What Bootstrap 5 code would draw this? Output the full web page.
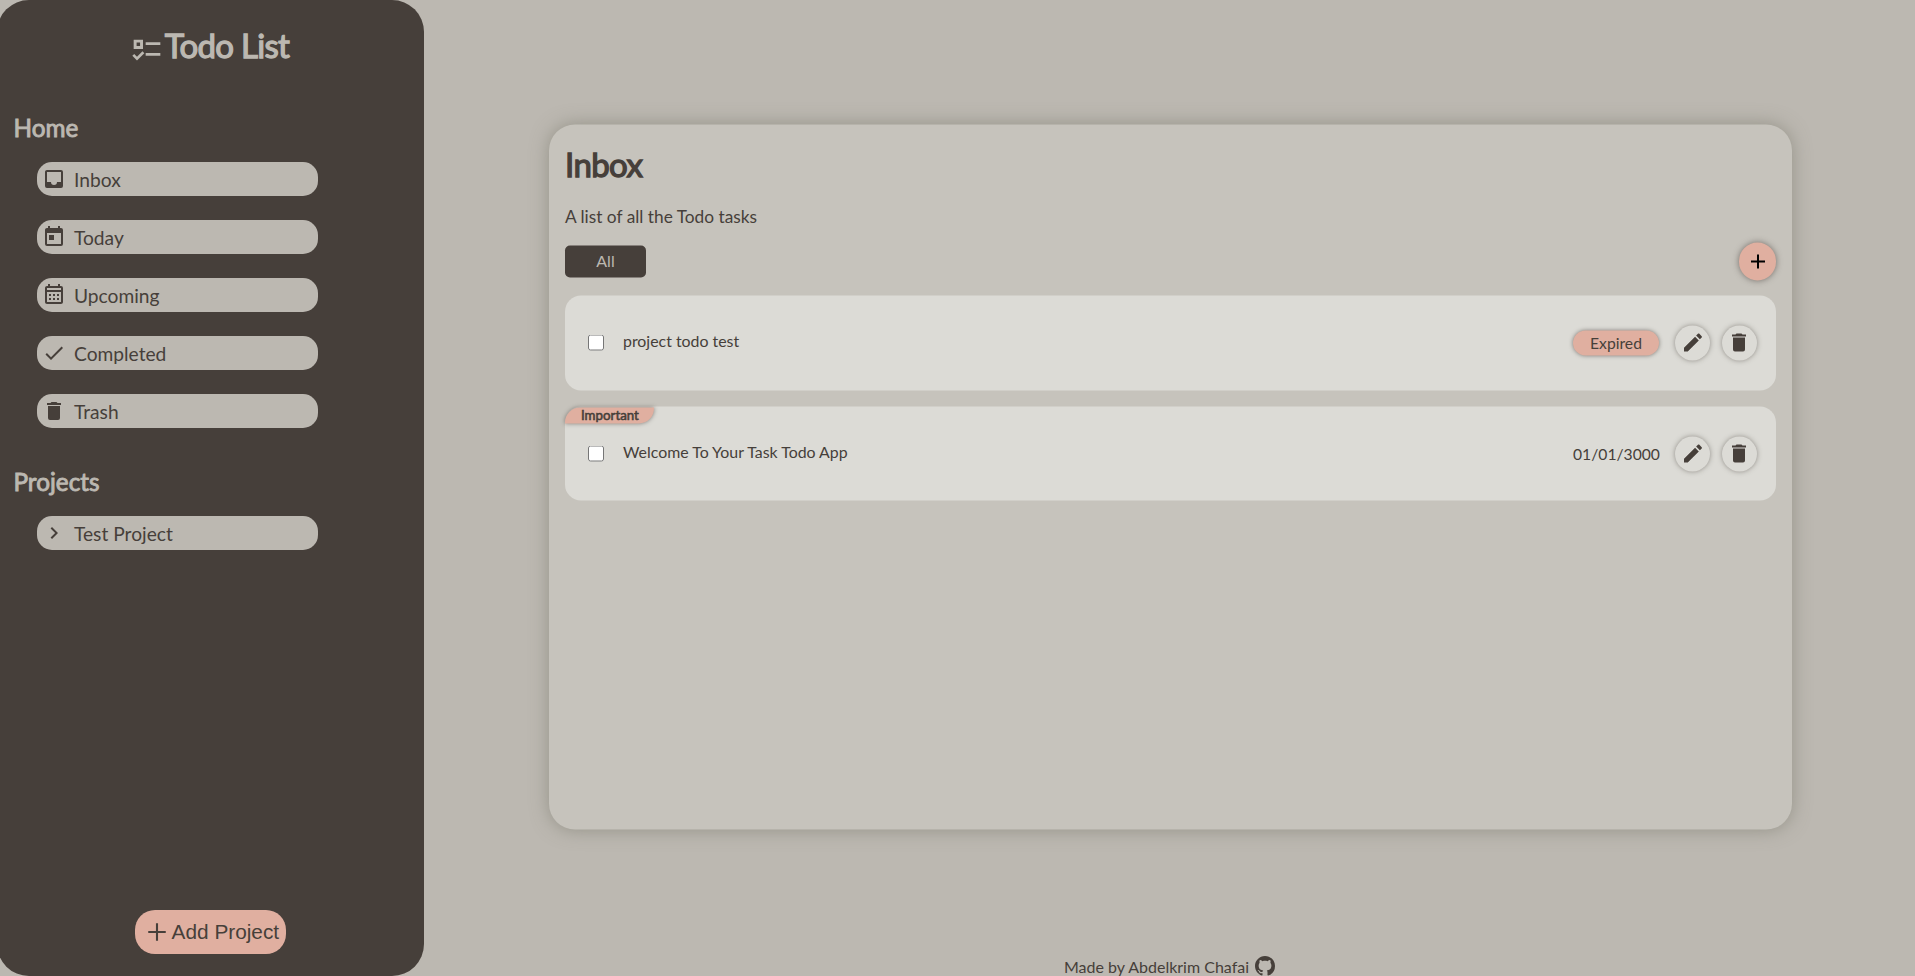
<!DOCTYPE html>
<html lang="en">
<head>
<meta charset="utf-8">
<meta name="viewport" content="width=device-width, initial-scale=1">
<title>Todo List</title>
<link rel="stylesheet" href="https://cdn.jsdelivr.net/npm/bootstrap@5.3.0/dist/css/bootstrap.min.css">
<style>
  :root { --ink:#463f3a; --sand:#bcb8b1; --rose:#e0afa0; --panel:#c6c3bc; --tile:#dcdbd6; }
  html, body { height:100%; }
  body { background:var(--sand); color:var(--ink); font-family:Lato, "Liberation Sans", sans-serif; line-height:normal; overflow:hidden; }
  svg { fill:currentColor; display:block; flex:none; }
  .sidebar { width:427px; height:976px; margin-left:-3px; background:var(--ink); color:var(--sand); border-radius:32px; }
  .brand { padding:25px 1px 0 0; gap:2px; height:92px; }
  .brand h1 { font-size:33px; font-weight:400; -webkit-text-stroke:1.3px currentColor; letter-spacing:-.7px; line-height:40px; }
  .brand svg { margin-top:8px; }
  .side-head { font-size:24.3px; font-weight:400; -webkit-text-stroke:.9px currentColor; line-height:29px; margin:0 0 0 16.5px; }
  .side-list { margin:20px 0 0 40px; width:281px; gap:24px; }
  .side-link { height:34px; border-radius:15px; background:var(--sand); color:var(--ink); font-size:19.2px; padding:0 0 0 5px; gap:8px; }
  .side-link svg { margin-bottom:1px; }
  .home-head { margin-top:21px; }
  .projects-head { margin-top:39px; }
  .add-project { width:151px; height:44px; margin:auto auto 22px 138px; border:0; border-radius:20px; background:var(--rose); color:var(--ink); font:20.8px "Liberation Sans", Arial, sans-serif; padding:0 0 0 8px; gap:.6px; white-space:nowrap; }
  .stage { padding-top:124px; }
  .panel { width:1243px; height:705px; margin-left:125px; padding:0 16px; border-radius:26px; background:var(--panel); box-shadow:0 0 18px rgba(110,110,95,.5); transform:translateY(.5px); }
  .panel h2 { font-size:33px; font-weight:400; -webkit-text-stroke:1.3px currentColor; letter-spacing:-.6px; line-height:40px; margin:19px 0 0; }
  .lede { font-size:17.3px; line-height:22px; margin:22px 0 0; }
  .tools { height:38px; margin-top:15px; }
  .tab-all { width:81px; height:32px; border:0; border-radius:5px; background:var(--ink); color:var(--sand); font-size:16px; line-height:28px; padding:0 0 2px; }
  .add-task { width:37.5px; height:37.5px; border:0; background:var(--rose); color:#000; box-shadow:0 0 6px rgba(70,63,58,.65); }
  .add-task svg { margin-left:1px; }
  .tile { height:95px; border-radius:16px; background:var(--tile); padding:0 19px 0 23px; margin-top:15px; font-size:15.9px; }
  .tile + .tile { height:94px; margin-top:16px; }
  .tile input { width:16px; height:16px; margin:0 0 1px; }
  .tile .task-name { margin-left:19px; padding-bottom:6px; }
  .flag { left:0; top:1px; width:89px; height:16px; border-radius:15px 0 15px 0; background:var(--rose); box-shadow:0 0 4px rgba(70,63,58,.6); font-size:13.3px; font-weight:400; -webkit-text-stroke:.55px currentColor; line-height:14px; padding-left:16px; }
  .due { width:86px; margin-right:1px; font-size:15.7px; white-space:nowrap; }
  .pill { height:25px; line-height:24px; border-radius:13px; background:var(--rose); box-shadow:0 0 4px rgba(70,63,58,.65); }
  .round { width:35px; height:35px; border:0; padding:0; background:var(--tile); color:var(--ink); box-shadow:0 0 5px rgba(70,63,58,.5); }
  .round svg { margin-bottom:1px; }
  .round-first { margin-left:15px; }
  .round-last { margin-left:12px; }
  .round-last svg { margin-left:-1px; }
  .credit { margin-top:123px; font-size:16px; gap:6px; line-height:30px; }
  .credit svg { margin-top:4px; }
</style>
</head>
<body>
<svg class="d-none" xmlns="http://www.w3.org/2000/svg">
  <symbol id="i-bin" viewBox="0 0 24 24"><path d="M19,4H15.5L14.5,3H9.5L8.5,4H5V6H19M6,19A2,2 0 0,0 8,21H16A2,2 0 0,0 18,19V7H6V19Z"/></symbol>
  <symbol id="i-pen" viewBox="0 0 24 24"><path d="M20.71,7.04C21.1,6.65 21.1,6 20.71,5.63L18.37,3.29C18,2.9 17.35,2.9 16.96,3.29L15.12,5.12L18.87,8.87M3,17.25V21H6.75L17.81,9.93L14.06,6.18L3,17.25Z"/></symbol>
  <symbol id="i-plus" viewBox="0 0 24 24"><path d="M19,13H13V19H11V13H5V11H11V5H13V11H19V13Z"/></symbol>
</svg>
<div class="d-flex">
  <aside class="sidebar d-flex flex-column flex-shrink-0">
    <div class="brand d-flex justify-content-center">
      <svg width="32" height="32" viewBox="0 0 24 24"><path d="M2,5H9V12H2V5M4.2,7.2V9.8H6.8V7.2M11,7H22V9H11V7M11,15H22V17H11V15M4.5,20.6L1,17.1L2.4,15.7L4.5,17.8L8.6,13.7L10,15.1Z" fill-rule="evenodd"/></svg>
      <h1 class="mb-0">Todo List</h1>
    </div>
    <nav>
      <h2 class="side-head home-head">Home</h2>
      <div class="side-list d-flex flex-column">
        <a class="side-link d-flex align-items-center text-decoration-none" href="#"><svg width="24" height="24" viewBox="0 0 24 24"><path d="M19,3H5C3.9,3 3,3.9 3,5V19A2,2 0 0,0 5,21H19A2,2 0 0,0 21,19V5A2,2 0 0,0 19,3M19,15H15A3,3 0 0,1 12,18A3,3 0 0,1 9,15H5V5H19V15Z"/></svg><span>Inbox</span></a>
        <a class="side-link d-flex align-items-center text-decoration-none" href="#"><svg width="24" height="24" viewBox="0 0 24 24"><path d="M7,10H12V15H7M19,19H5V8H19M19,3H18V1H16V3H8V1H6V3H5C3.89,3 3,3.9 3,5V19A2,2 0 0,0 5,21H19A2,2 0 0,0 21,19V5A2,2 0 0,0 19,3Z" fill-rule="evenodd"/></svg><span>Today</span></a>
        <a class="side-link d-flex align-items-center text-decoration-none" href="#"><svg width="24" height="24" viewBox="0 0 24 24"><path d="M7,11H9V13H7V11M21,5V19C21,20.11 20.11,21 19,21H5C3.89,21 3,20.1 3,19V5C3,3.9 3.9,3 5,3H6V1H8V3H16V1H18V3H19A2,2 0 0,1 21,5M5,7H19V5H5V7M19,19V9H5V19H19M15,13V11H17V13H15M11,13V11H13V13H11M7,15H9V17H7V15M15,17V15H17V17H15M11,17V15H13V17H11Z"/></svg><span>Upcoming</span></a>
        <a class="side-link d-flex align-items-center text-decoration-none" href="#"><svg width="24" height="24" viewBox="0 0 24 24"><path d="M21,7L9,19L3.5,13.5L4.91,12.09L9,16.17L19.59,5.59L21,7Z"/></svg><span>Completed</span></a>
        <a class="side-link d-flex align-items-center text-decoration-none" href="#"><svg width="24" height="24"><use href="#i-bin"/></svg><span>Trash</span></a>
      </div>
      <h2 class="side-head projects-head">Projects</h2>
      <div class="side-list d-flex flex-column">
        <a class="side-link d-flex align-items-center text-decoration-none" href="#"><svg width="24" height="24" viewBox="0 0 24 24"><path d="M8.59,16.58L13.17,12L8.59,7.41L10,6L16,12L10,18L8.59,16.58Z"/></svg><span>Test Project</span></a>
      </div>
    </nav>
    <button class="add-project d-flex align-items-center"><svg width="28" height="28" viewBox="0 0 24 24"><path d="M19.5,12.9H12.9V19.5H11.1V12.9H4.5V11.1H11.1V4.5H12.9V11.1H19.5Z"/></svg>Add Project</button>
  </aside>
  <main class="stage flex-grow-1">
    <section class="panel d-flex flex-column">
      <h2>Inbox</h2>
      <p class="lede">A list of all the Todo tasks</p>
      <div class="tools d-flex align-items-center justify-content-between">
        <button class="tab-all">All</button>
        <button class="add-task rounded-circle d-flex align-items-center justify-content-center p-0"><svg width="24" height="24"><use href="#i-plus"/></svg></button>
      </div>
      <div class="tile d-flex align-items-center">
        <input type="checkbox" aria-label="Done">
        <span class="task-name">project todo test</span>
        <span class="due pill text-center ms-auto">Expired</span>
        <button class="round round-first rounded-circle d-flex align-items-center justify-content-center"><svg width="24" height="24"><use href="#i-pen"/></svg></button>
        <button class="round round-last rounded-circle d-flex align-items-center justify-content-center"><svg width="24" height="24"><use href="#i-bin"/></svg></button>
      </div>
      <div class="tile d-flex align-items-center position-relative">
        <span class="flag position-absolute">Important</span>
        <input type="checkbox" aria-label="Done">
        <span class="task-name">Welcome To Your Task Todo App</span>
        <span class="due text-center ms-auto">01/01/3000</span>
        <button class="round round-first rounded-circle d-flex align-items-center justify-content-center"><svg width="24" height="24"><use href="#i-pen"/></svg></button>
        <button class="round round-last rounded-circle d-flex align-items-center justify-content-center"><svg width="24" height="24"><use href="#i-bin"/></svg></button>
      </div>
    </section>
    <footer class="credit d-flex justify-content-center">
      <span>Made by Abdelkrim Chafai</span>
      <svg width="20" height="20" viewBox="0 0 16 16"><path d="M8 0C3.58 0 0 3.58 0 8c0 3.54 2.29 6.53 5.47 7.59.4.07.55-.17.55-.38 0-.19-.01-.82-.01-1.49-2.01.37-2.53-.49-2.69-.94-.09-.23-.48-.94-.82-1.13-.28-.15-.68-.52-.01-.53.63-.01 1.08.58 1.23.82.72 1.21 1.87.87 2.33.66.07-.52.28-.87.51-1.07-1.78-.2-3.64-.89-3.64-3.95 0-.87.31-1.59.82-2.15-.08-.2-.36-1.02.08-2.12 0 0 .67-.21 2.2.82.64-.18 1.32-.27 2-.27s1.36.09 2 .27c1.53-1.04 2.2-.82 2.2-.82.44 1.1.16 1.92.08 2.12.51.56.82 1.27.82 2.15 0 3.07-1.87 3.75-3.65 3.95.29.25.54.73.54 1.48 0 1.07-.01 1.93-.01 2.2 0 .21.15.46.55.38A8.01 8.01 0 0 0 16 8c0-4.42-3.58-8-8-8"/></svg>
    </footer>
  </main>
</div>
<script src="https://cdn.jsdelivr.net/npm/bootstrap@5.3.0/dist/js/bootstrap.bundle.min.js"></script>
</body>
</html>
